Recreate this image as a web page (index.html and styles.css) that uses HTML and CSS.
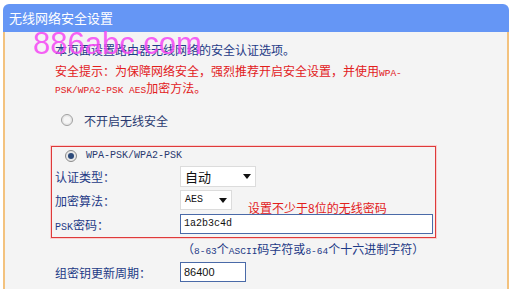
FILE: index.html
```html
<!DOCTYPE html>
<html>
<head>
<meta charset="utf-8">
<link rel="stylesheet" href="styles.css">
</head>
<body>
<div class="panel">
  <div class="head">无线网络安全设置</div>
  <div class="content">
    <div class="watermark">886abc.com</div>
    <p class="intro">本页面设置路由器无线网络的安全认证选项。</p>
    <p class="warn">安全提示：为保障网络安全，强烈推荐开启安全设置，并使用<span class="en">WPA-</span><br><span class="en">PSK/WPA2-PSK AES</span>加密方法。</p>
    <div class="radio-row off">
      <svg class="radio" width="12" height="12" viewBox="0 0 12 12"><circle cx="6" cy="6" r="5.5" fill="#e8e8e8" stroke="#a0a0a0"/><circle cx="6" cy="6" r="3.5" fill="#f6f6f6"/></svg>
      <span>不开启无线安全</span>
    </div>
    <div class="box">
      <div class="radio-row on">
        <svg class="radio" width="12" height="12" viewBox="0 0 12 12"><circle cx="6" cy="6" r="5.5" fill="#e8e8e8" stroke="#8a8a8a"/><circle cx="6" cy="6" r="3" fill="#2c4a7a"/></svg>
        <span class="en wpa">WPA-PSK/WPA2-PSK</span>
      </div>
      <div class="row">
        <span class="label">认证类型：</span>
        <div class="select wide"><span>自动</span><svg width="8" height="5" viewBox="0 0 8 5"><path d="M0 0H8L4 5Z" fill="#111"/></svg></div>
      </div>
      <div class="row">
        <span class="label">加密算法：</span>
        <div class="select narrow"><span class="en">AES</span><svg width="8" height="5" viewBox="0 0 8 5"><path d="M0 0H8L4 5Z" fill="#111"/></svg></div>
        <span class="note">设置不少于8位的无线密码</span>
      </div>
      <div class="row">
        <span class="label"><span class="en psk">PSK</span>密码：</span>
        <div class="input long"><span class="en">1a2b3c4d</span></div>
      </div>
    </div>
    <p class="hint">（<span class="en">8-63</span>个<span class="en">ASCII</span>码字符或<span class="en">8-64</span>个十六进制字符）</p>
    <div class="row plain">
      <span class="label">组密钥更新周期：</span>
      <div class="input short"><span class="num">86400</span></div>
    </div>
    <p class="hint tail">（单位为秒，最小值为<span class="en">30</span>，不更新则为<span class="en">0</span>）</p>
  </div>
</div>
</body>
</html>
```
FILE: styles.css
```css
* { box-sizing: border-box; }
html, body { margin: 0; padding: 0; background: #ffffff; overflow: hidden; }
body {
  font-family: "Noto Sans CJK SC", "Noto Sans", sans-serif;
  font-size: 12px;
  color: #1e3a86;
  width: 516px;
  height: 289px;
}
.panel {
  margin: 4px 0 0 3px;
  width: 506px;
}
.head {
  height: 28px;
  line-height: 28px;
  background: #6596f5;
  color: #ffffff;
  font-size: 13px;
  padding-left: 6px;
  border-radius: 6px 6px 0 0;
}
.content {
  position: relative;
  background: #f4f4f4;
  border-left: 2px solid #f3c27e;
  border-right: 2px solid #f3c27e;
  padding: 9px 0 0 46px;
  height: 300px;
}
.watermark {
  position: absolute;
  left: 28px;
  top: -6px;
  font-family: "Liberation Sans", sans-serif;
  font-size: 31px;
  color: rgba(245, 70, 245, 0.85);
  pointer-events: none;
}
p { margin: 0; }
.en {
  font-family: "Liberation Mono", monospace;
  font-size: 9.5px;
  line-height: 1;
}
.intro {
  padding-left: 4px;
  line-height: 17px;
  margin-bottom: 4px;
}
.warn {
  padding-left: 4px;
  line-height: 17px;
  color: #e2201c;
}
.radio-row {
  display: flex;
  align-items: center;
  gap: 0;
}
.radio { flex: none; margin-left: 10px; }
.radio-row.off {
  height: 20px;
  margin-top: 14px;
  margin-bottom: 16px;
  color: #2a3a70;
}
.radio-row.off span { margin-left: 11px; }
.radio-row.on { height: 17px; }
.radio-row.on .wpa { margin-left: 9px; font-size: 10px; color: #2a3a70; }
.box {
  width: 385px;
  border: 1px solid #de3a3a;
  box-shadow: 0 0 0 1px rgba(255, 170, 170, 0.5);
  padding: 0 0 1px 3px;
  position: relative;
}
.row {
  display: flex;
  align-items: center;
  height: 24px;
}
.label { width: 125px; flex: none; }
.psk { font-size: 10px; }
.select {
  height: 21px;
  background: #ffffff;
  border: 1px solid #dcdcdc;
  display: flex;
  align-items: center;
  justify-content: space-between;
  padding: 0 4px 0 4px;
  color: #111;
}
.select.wide { width: 76px; font-size: 13px; }
.select.narrow { width: 52px; height: 20px; }
.select.narrow .en { font-size: 10px; }
.note {
  position: absolute;
  left: 196px;
  top: 53px;
  color: #e2201c;
  line-height: 16px;
}
.input {
  height: 20px;
  background: #ffffff;
  border: 1px solid #4a6aa8;
  display: flex;
  align-items: center;
  padding-left: 3px;
  color: #111;
}
.input.long { width: 253px; }
.input.long .en { font-size: 10px; }
.input.short { width: 66px; }
.num { font-family: "Liberation Sans", sans-serif; font-size: 11px; }
.hint {
  margin-top: 2px;
  padding-left: 131px;
  line-height: 17px;
}
.row.plain { margin-top: 3px; padding-left: 4px; }
.hint.tail { margin-top: 3px; }
```
